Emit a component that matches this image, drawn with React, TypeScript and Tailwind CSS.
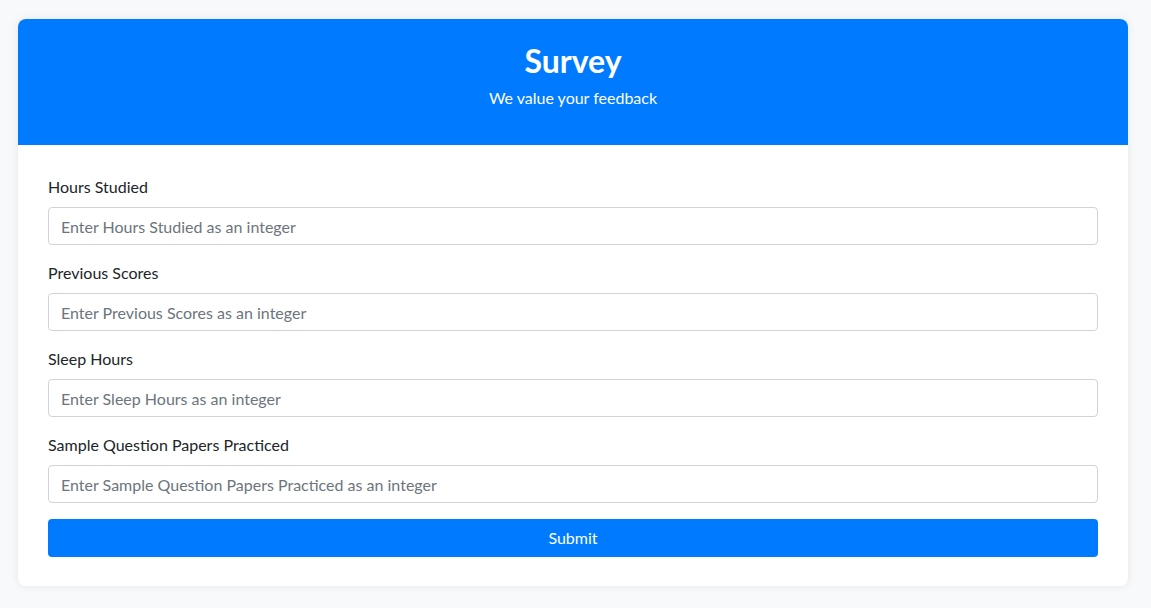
import React from 'react';

const fields = [
  'Hours Studied',
  'Previous Scores',
  'Sleep Hours',
  'Sample Question Papers Practiced',
];

export default function App() {
  return (
    <div
      className="min-h-screen bg-[#f8f9fa] px-[18px] pt-[19px] pb-[22px] text-[#212529]"
      style={{ fontFamily: '"Segoe UI", Lato, "Open Sans", sans-serif' }}
    >
      <div className="w-[1110px] bg-white rounded-[8px] shadow-[0_0_10px_rgba(0,0,0,0.08)] overflow-hidden">
        {/* Header */}
        <div className="bg-[#007bff] text-white text-center pt-[23px] pb-[35px]">
          <h1 className="text-[32px] font-bold leading-[38px] mb-[6px]">Survey</h1>
          <p className="text-[16px] leading-[24px]">We value your feedback</p>
        </div>

        {/* Form */}
        <form className="px-[30px] pt-[30px] pb-[29px]" onSubmit={e => e.preventDefault()}>
          {fields.map(name => (
            <div key={name} className="mb-[16px]">
              <label className="block text-[16px] leading-[24px] mb-[8px]">{name}</label>
              <input
                type="text"
                placeholder={`Enter ${name} as an integer`}
                className="w-full h-[38px] px-[12px] text-[16px] border border-[#ced4da] rounded-[4px] outline-none placeholder:text-[#6c757d]"
              />
            </div>
          ))}
          <button
            type="submit"
            className="w-full h-[38px] bg-[#007bff] text-white text-[16px] rounded-[4px]"
          >
            Submit
          </button>
        </form>
      </div>
    </div>
  );
}
